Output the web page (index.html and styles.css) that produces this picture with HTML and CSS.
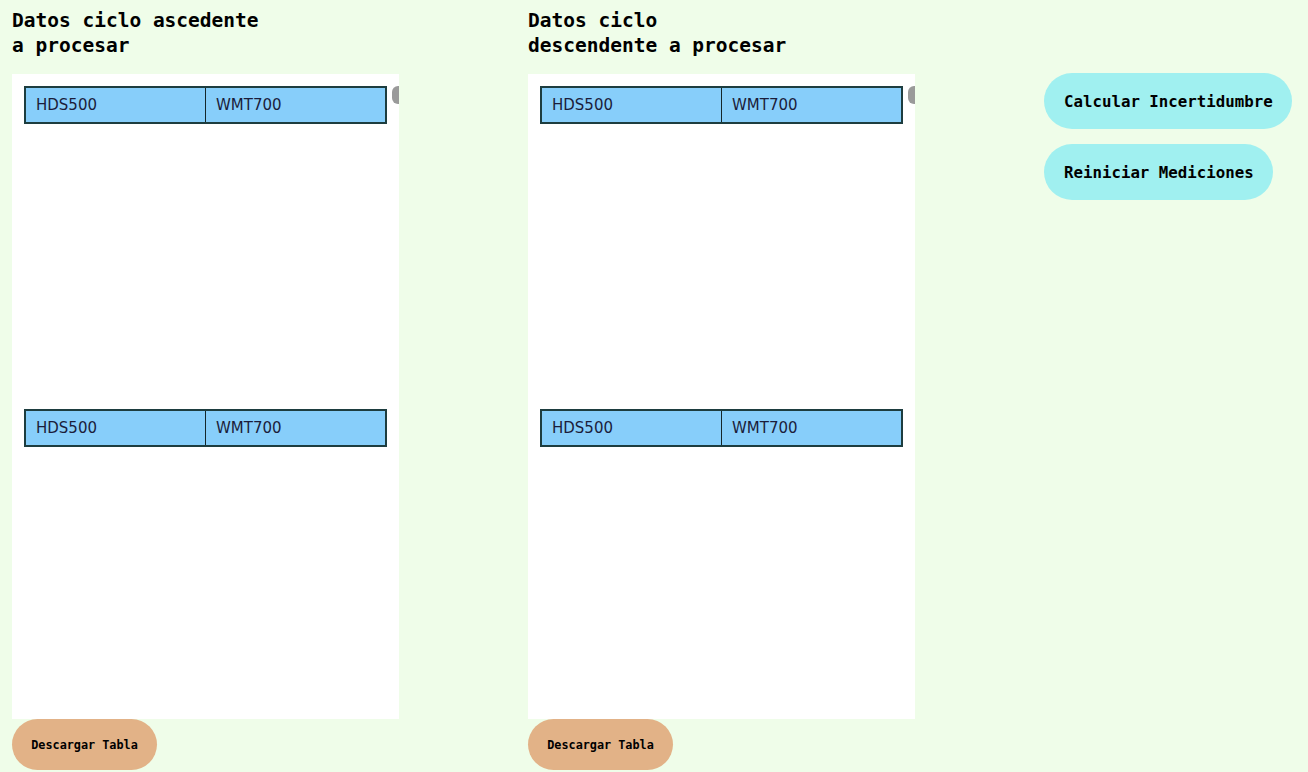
FILE: index.html
```html
<!DOCTYPE html>
<html lang="es">
<head>
<meta charset="utf-8">
<title>Datos ciclo</title>
<link rel="stylesheet" href="styles.css">
</head>
<body>
<div class="layout">
  <section class="column">
    <h2 class="title">Datos ciclo ascedente a procesar</h2>
    <div class="panel">
      <div class="block">
        <table class="data"><tr><td>HDS500</td><td>WMT700</td></tr></table>
      </div>
      <div class="block">
        <table class="data"><tr><td>HDS500</td><td>WMT700</td></tr></table>
      </div>
      <span class="thumb"></span>
    </div>
    <button class="btn-download">Descargar Tabla</button>
  </section>
  <section class="column">
    <h2 class="title">Datos ciclo descendente a procesar</h2>
    <div class="panel">
      <div class="block">
        <table class="data"><tr><td>HDS500</td><td>WMT700</td></tr></table>
      </div>
      <div class="block">
        <table class="data"><tr><td>HDS500</td><td>WMT700</td></tr></table>
      </div>
      <span class="thumb"></span>
    </div>
    <button class="btn-download">Descargar Tabla</button>
  </section>
  <div class="actions">
    <button class="btn-action">Calcular Incertidumbre</button>
    <button class="btn-action">Reiniciar Mediciones</button>
  </div>
</div>
</body>
</html>
```

FILE: styles.css
```css
html, body {
  margin: 0;
  padding: 0;
}
body {
  background: #effde9;
  font-family: "DejaVu Sans Mono", monospace;
  color: #000;
  width: 1308px;
  height: 772px;
  overflow: hidden;
}
.layout {
  display: grid;
  grid-template-columns: 516px 516px 1fr;
  padding: 8px 0 0 12px;
}
.column {
  display: flex;
  flex-direction: column;
  align-items: flex-start;
}
.title {
  margin: 0 0 16px 0;
  width: 262px;
  font-family: "DejaVu Sans Mono", monospace;
  font-weight: bold;
  font-size: 19.5px;
  line-height: 25px;
  color: #000;
}
.panel {
  position: relative;
  width: 387px;
  height: 645px;
  box-sizing: border-box;
  background: #fff;
  padding: 12px 12px 0 12px;
  overflow: hidden;
}
.block {
  height: 323px;
}
.data {
  width: 363px;
  border-collapse: collapse;
  table-layout: fixed;
  border: 2px solid #1d3d3f;
  background: #87cefa;
}
.data td {
  height: 36px;
  box-sizing: border-box;
  padding: 0 10px 1px 10px;
  font-family: "DejaVu Sans", Verdana, sans-serif;
  font-size: 15px;
  color: #1b1d3a;
  border-left: 1px solid #14262a;
  vertical-align: middle;
}
.data td:first-child {
  border-left: none;
}
.thumb {
  position: absolute;
  top: 12px;
  left: 380px;
  width: 12px;
  height: 18px;
  border-radius: 6px;
  background: #9a9a9a;
}
.btn-download {
  width: 145px;
  height: 51px;
  border: none;
  border-radius: 26px;
  background: #e2b287;
  font-family: "DejaVu Sans Mono", monospace;
  font-weight: bold;
  font-size: 11.8px;
  color: #000;
  padding: 0;
  cursor: pointer;
}
.actions {
  display: flex;
  flex-direction: column;
  align-items: flex-start;
  gap: 15px;
  padding-top: 65px;
}
.btn-action {
  height: 56px;
  border: none;
  border-radius: 28px;
  background: #a0f0f0;
  padding: 0 19px 0 20px;
  font-family: "DejaVu Sans Mono", monospace;
  font-weight: bold;
  font-size: 15.75px;
  color: #000;
  cursor: pointer;
}
```
